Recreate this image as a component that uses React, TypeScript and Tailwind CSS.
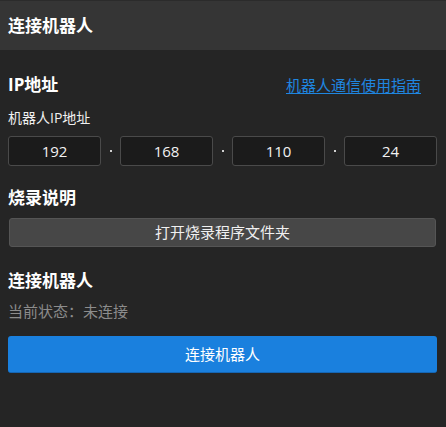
import React from "react";

const font = { fontFamily: '"Open Sans", "Noto Sans CJK SC", sans-serif' };

export default function App() {
  const parts = ["192", "168", "110", "24"];
  return (
    <div className="w-[446px] h-[427px] bg-[#252525] text-white overflow-hidden" style={font}>
      {/* Header */}
      <div className="h-[50px] bg-[#353535] border-t border-[#2b2b2b] flex items-center px-2">
        <span className="text-[17px] font-bold leading-6">连接机器人</span>
      </div>

      <div className="pl-2 pr-[9px]">
        {/* IP section */}
        <div className="mt-[23px] h-6 flex items-center justify-between">
          <span className="text-[17px] font-bold leading-6">IP地址</span>
          <a className="text-[15px] leading-6 text-[#1f86e0] underline underline-offset-2 mr-[16px]">机器人通信使用指南</a>
        </div>
        <div className="mt-[11px] h-5 text-[14px] leading-5 text-[#f0f0f0]">机器人IP地址</div>
        <div className="mt-2 flex items-center">
          {parts.map((p, i) => (
            <React.Fragment key={i}>
              {i > 0 && (
                <div className="w-[19px] flex justify-center">
                  <div className="w-[2px] h-[2px] bg-[#d0d0d0]" />
                </div>
              )}
              <div className="flex-1 h-[30px] bg-[#1b1b1b] border border-[#4a4a4a] rounded-[3px] flex items-center justify-center text-[15px] text-[#f2f2f2]">
                {p}
              </div>
            </React.Fragment>
          ))}
        </div>

        {/* Flash section */}
        <div className="mt-5 h-6 text-[17px] font-bold leading-6">烧录说明</div>
        <button className="mt-2 mx-px w-[427px] h-[29px] bg-[#474747] border border-[#555555] rounded-[3px] flex items-center justify-center text-[15px] text-[#f0f0f0]">
          打开烧录程序文件夹
        </button>

        {/* Connect section */}
        <div className="mt-[22px] h-6 text-[17px] font-bold leading-6">连接机器人</div>
        <div className="mt-2 h-5 text-[15px] leading-5 text-[#8c8c8c]">当前状态：未连接</div>
        <button className="mt-[15px] w-full h-[37px] bg-[#1a80de] border-b border-[#1666b3] rounded-[3px] flex items-center justify-center text-[15px] text-white">
          连接机器人
        </button>
      </div>
    </div>
  );
}
